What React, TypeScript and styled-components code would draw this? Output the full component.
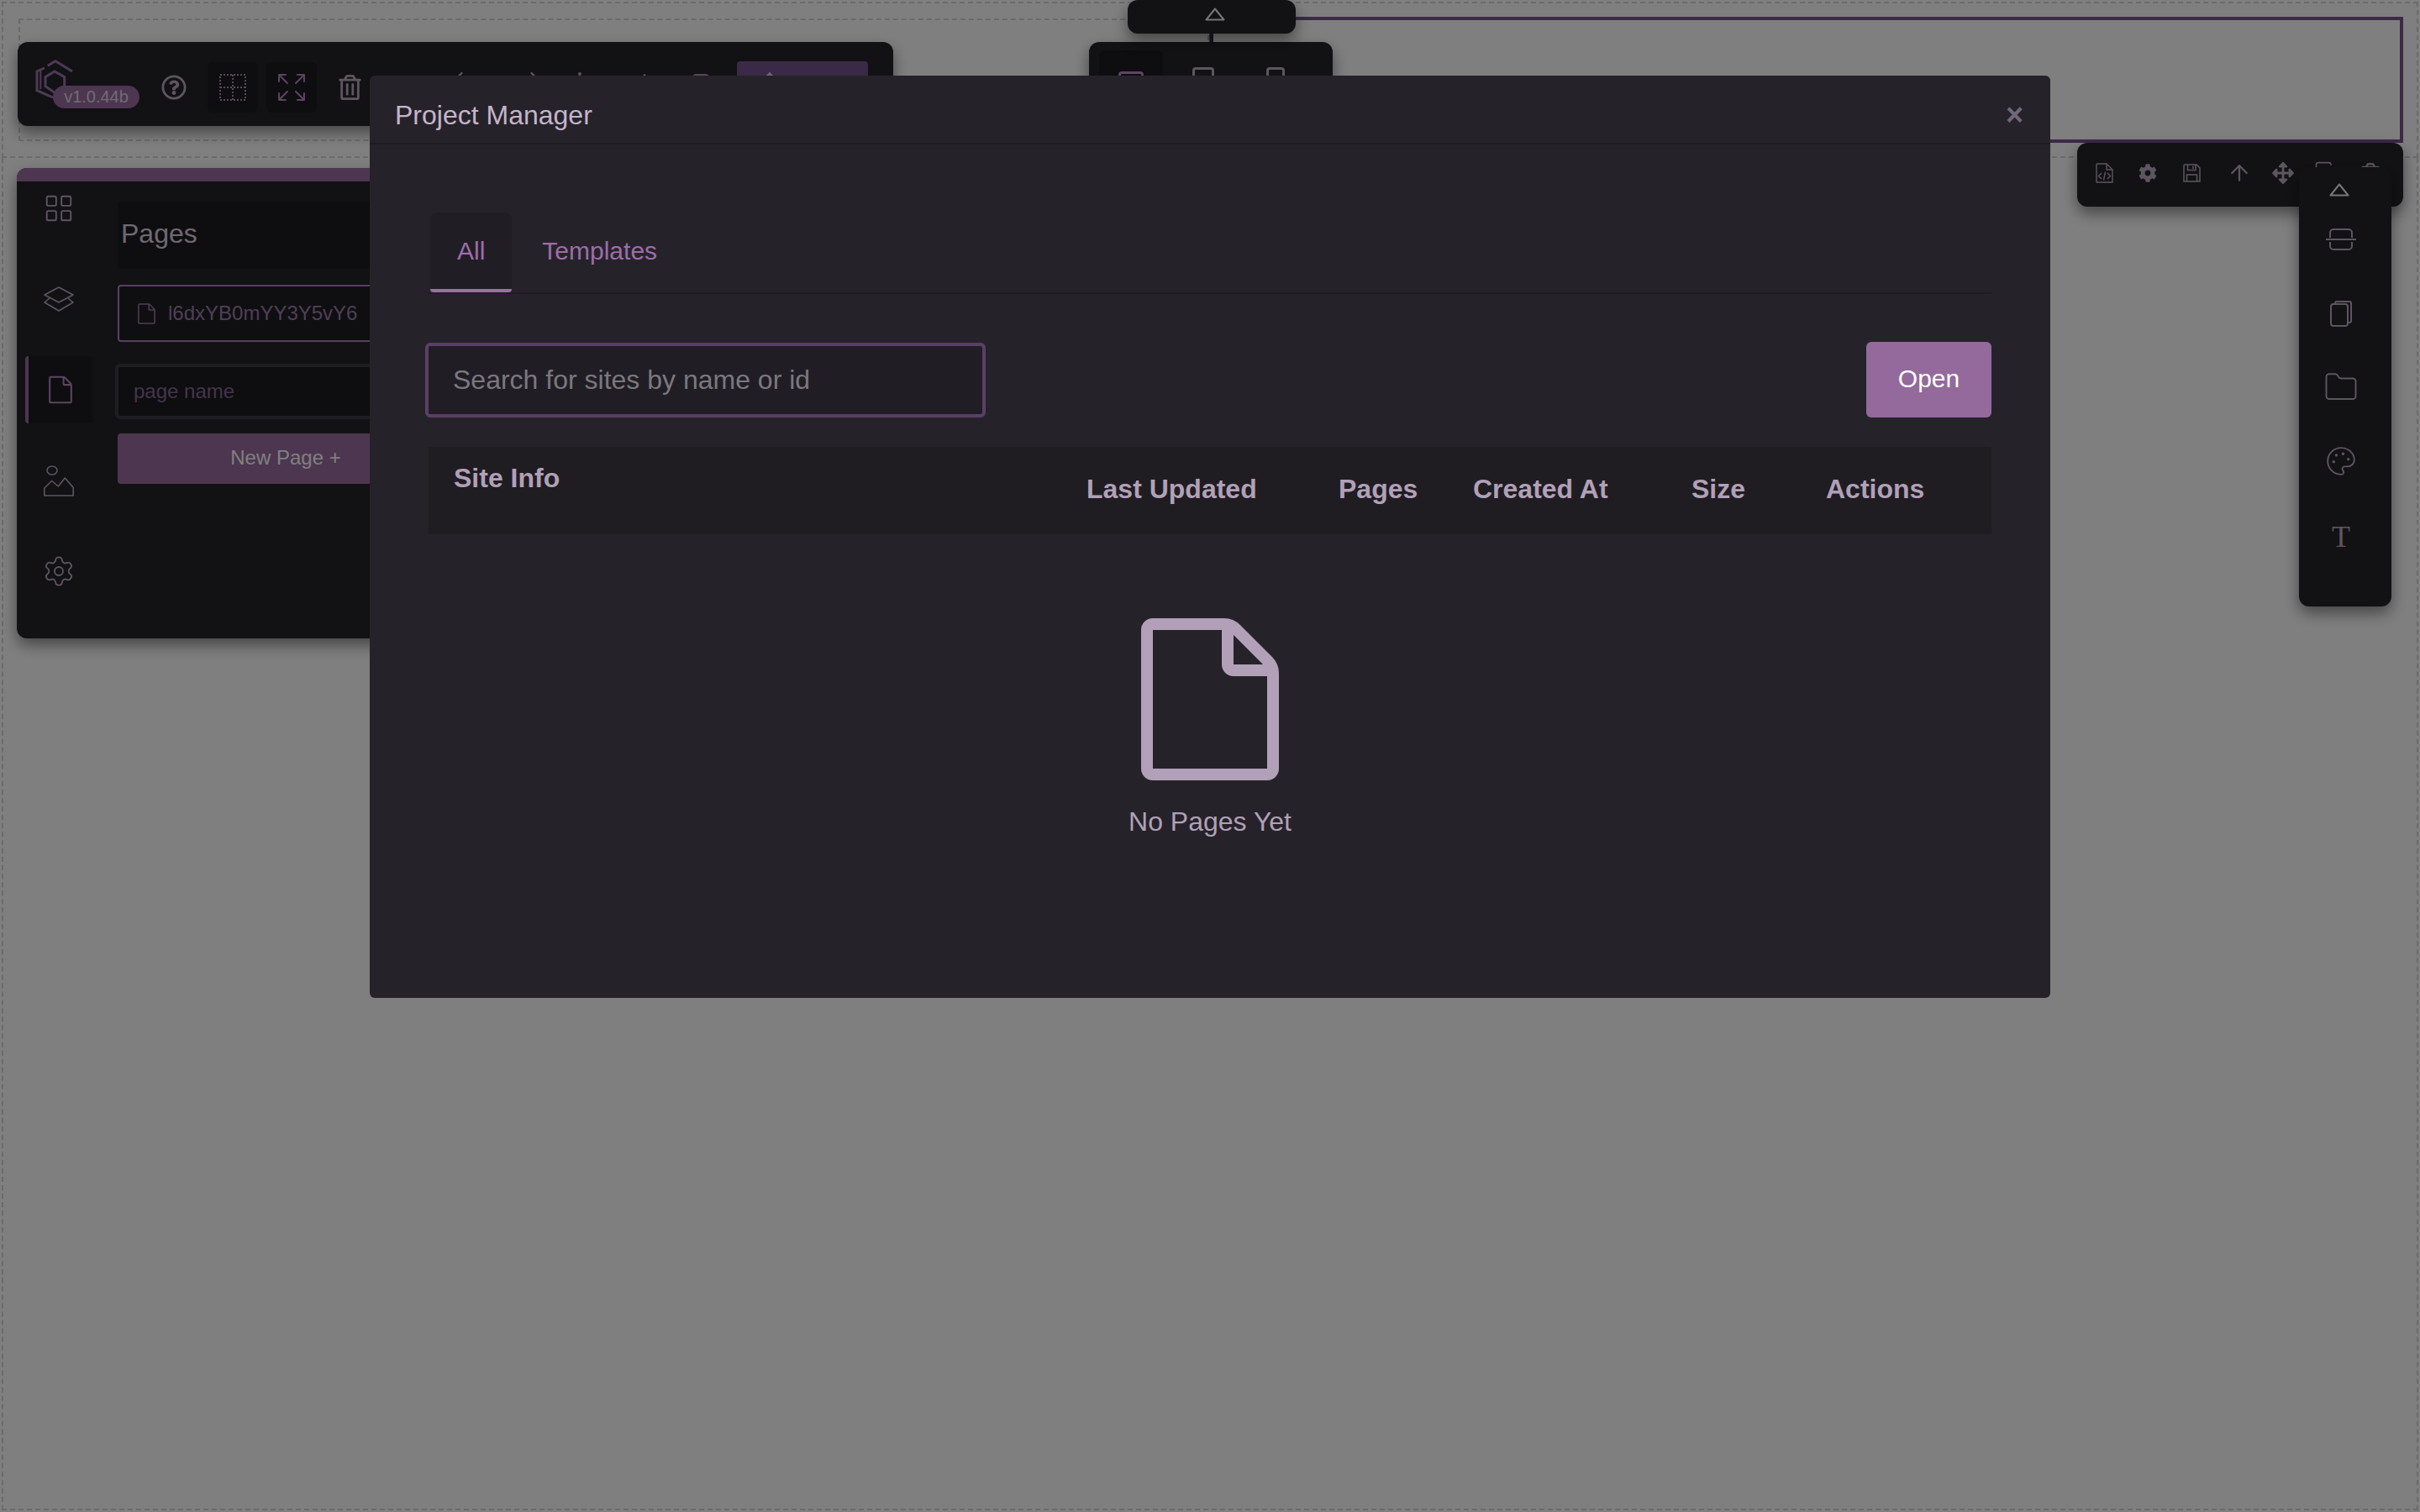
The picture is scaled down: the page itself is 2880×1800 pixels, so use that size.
import styled, { createGlobalStyle, css } from "styled-components"
import {
  ArrowUp,
  ChevronLeft,
  ChevronRight,
  Copy,
  Folder,
  LayoutGrid,
  Palette,
  Settings,
} from "lucide-react"
import { FaArrowsAlt, FaCog, FaRegQuestionCircle, FaRegTrashAlt } from "react-icons/fa"
import { BsArrowsFullscreen } from "react-icons/bs"

import type { FC } from "react"

const PANEL = "#252329"
const PANEL_DARK = "#1c1b1e"
const ACCENT = "#9a6ca0"
const ICON_GREY = "#baaac0"
const ICON_PURPLE = "#b888c6"
const MODAL_TEXT = "#b1a0b7"

const GlobalStyle = createGlobalStyle`
  html, body {
    margin: 0;
    padding: 0;
    width: 2880px;
    height: 1800px;
    overflow: hidden;
    background: #fff;
    font-family: "Liberation Sans", Arial, sans-serif;
  }
  * {
    box-sizing: border-box;
  }
`

const floating = css`
  position: absolute;
  background: ${PANEL};
  border-radius: 12px;
  box-shadow: 0 8px 18px rgba(0, 0, 0, 0.45);
`

const Page = styled.div`
  position: relative;
  width: 2880px;
  height: 1800px;
  padding: 2px;
  display: flex;
  flex-direction: column;
`

const TopSection = styled.section`
  height: 186px;
  padding: 0 16px 0 18px;
  display: flex;
  align-items: center;
  border: 2px dashed #d6d6d6;
`

const DashedCell = styled.div`
  flex: 1;
  height: 146px;
  border: 2px dashed #d6d6d6;
`

const SelectedCell = styled.div`
  flex: 1;
  height: 150px;
  border: 4px solid #76548f;
`

const BodySection = styled.section`
  flex: 1;
  border: 2px dashed #d6d6d6;
  border-top: none;
`

/* main toolbar */
const MainToolbar = styled.div`
  ${floating};
  left: 21px;
  top: 50px;
  width: 1042px;
  height: 100px;
  padding: 8px 0 0 21px;
  display: flex;
  align-items: center;
`

const LogoBlock = styled.div`
  position: relative;
  width: 124px;
  height: 60px;
  padding-bottom: 20px;
  display: flex;
  align-items: center;
`

const VersionPill = styled.span`
  position: absolute;
  left: 21px;
  top: 28px;
  width: 103px;
  height: 27px;
  border-radius: 14px;
  background: ${ACCENT};
  color: #e0d8e4;
  font-size: 20px;
  line-height: 27px;
  text-align: center;
`

const ToolSlot = styled.span<{ $left: number; $width: number; $color?: string; $up?: number }>`
  margin-left: ${props => props.$left}px;
  margin-bottom: ${props => props.$up ?? 0}px;
  width: ${props => props.$width}px;
  display: flex;
  align-items: center;
  justify-content: center;
  color: ${props => props.$color ?? ICON_GREY};
`

const ToolButton = styled(ToolSlot)`
  height: 60px;
  border-radius: 6px;
  background: ${PANEL_DARK};
`

const ToolDot = styled.span`
  width: 4px;
  height: 4px;
  margin-top: -32px;
  border-radius: 50%;
  background: ${ICON_GREY};
`

const ToolPill = styled.span`
  width: 24px;
  height: 32px;
  border-radius: 7px;
  border: 3px solid ${ICON_PURPLE};
`

const PublishButton = styled.div`
  margin-left: 31px;
  width: 156px;
  height: 62px;
  padding: 0 0 14px 23px;
  border-radius: 4px;
  background: #76548f;
  color: #d8cce0;
  display: flex;
  align-items: center;
`

/* device switcher */
const TopHandle = styled.div`
  ${floating};
  left: 1342px;
  top: 0;
  width: 200px;
  height: 40px;
  display: flex;
  justify-content: center;
  padding: 9px 0 0 8px;

  &::before {
    content: "";
    position: absolute;
    left: 95px;
    top: 42px;
    width: 2px;
    height: 6px;
    background: ${ACCENT};
  }

  &::after {
    content: "";
    position: absolute;
    left: 98px;
    top: 40px;
    width: 4px;
    height: 10px;
    background: ${PANEL};
  }
`

const DeviceToolbar = styled.div`
  ${floating};
  left: 1296px;
  top: 50px;
  width: 290px;
  height: 100px;
  padding: 10px 12px;
  display: flex;
  gap: 10px;
`

const DeviceCell = styled.div<{ $active?: boolean }>`
  width: 76px;
  height: 80px;
  border-radius: 6px;
  display: flex;
  align-items: center;
  justify-content: center;
  background: ${props => (props.$active ? PANEL_DARK : "transparent")};
`

const DeviceFrame = styled.span<{ $w: number; $h: number; $active?: boolean }>`
  width: ${props => props.$w}px;
  height: ${props => props.$h}px;
  border-radius: 4px;
  border: 3px solid ${props => (props.$active ? ICON_PURPLE : ICON_GREY)};
`

/* section toolbar */
const SectionToolbar = styled.div`
  ${floating};
  left: 2472px;
  top: 170px;
  width: 388px;
  height: 76px;
  padding: 0 0 4px 6px;
  display: flex;
  align-items: center;
`

const SectionTool = styled.span<{ $gap?: boolean }>`
  width: 52px;
  margin-left: ${props => (props.$gap ? 5 : 0)}px;
  display: flex;
  justify-content: center;
  color: ${ICON_GREY};
`

const SideRail = styled.div`
  ${floating};
  left: 2736px;
  top: 199px;
  width: 110px;
  height: 523px;
  padding: 19px 10px 0 0;
  display: flex;
  flex-direction: column;
  align-items: center;
`

const SideHandle = styled.div`
  height: 23px;
  margin-right: 4px;
`

const SideTool = styled.span`
  height: 88px;
  display: flex;
  align-items: center;
  color: ${ICON_GREY};
`

const SerifGlyph = styled.span`
  margin-top: 4px;
  font-family: "Liberation Serif", "Times New Roman", serif;
  font-size: 36px;
  line-height: 36px;
  color: ${ICON_GREY};
`

/* left panel */
const LeftPanel = styled.div`
  ${floating};
  left: 20px;
  top: 200px;
  width: 570px;
  height: 560px;
  overflow: hidden;
`

const PanelBar = styled.div`
  position: relative;
  height: 16px;
  background: ${ACCENT};
`

const PanelBody = styled.div`
  display: flex;
`

const PanelRail = styled.div`
  width: 120px;
  padding-left: 10px;
  margin-top: -8px;
  display: flex;
  flex-direction: column;
  gap: 28px;
`

const RailItem = styled.div<{ $active?: boolean }>`
  width: 80px;
  height: 80px;
  border-radius: 4px;
  display: flex;
  align-items: center;
  justify-content: center;
  color: ${props => (props.$active ? ICON_PURPLE : ICON_GREY)};
  background: ${props => (props.$active ? PANEL_DARK : "transparent")};
  border-left: ${props => (props.$active ? `4px solid ${ACCENT}` : "none")};
`

const PanelMain = styled.div`
  width: 400px;
  padding-top: 24px;
  display: flex;
  flex-direction: column;
`

const PanelTitle = styled.div`
  height: 80px;
  padding-left: 4px;
  border-radius: 4px;
  background: ${PANEL_DARK};
  color: #dcd3e0;
  font-size: 32px;
  line-height: 76px;
`

const PageRow = styled.div`
  height: 68px;
  margin-top: 19px;
  padding-left: 22px;
  display: flex;
  align-items: center;
  gap: 15px;
  border: 2px solid #b080c0;
  border-radius: 4px;
  background: #1f1e22;
  color: #a07cac;
  font-size: 24px;
`

const PageNameInput = styled.div`
  height: 66px;
  margin: 26px 0 0 -3px;
  padding-left: 18px;
  display: flex;
  align-items: center;
  border: 4px solid #3d3b42;
  border-radius: 6px;
  background: ${PANEL_DARK};
  color: #886a94;
  font-size: 24px;
`

const NewPageButton = styled.div`
  height: 60px;
  margin-top: 17px;
  border-radius: 4px;
  background: ${ACCENT};
  color: #fff;
  font-size: 24px;
  line-height: 58px;
  text-align: center;
`

/* modal */
const Backdrop = styled.div`
  position: absolute;
  inset: 0;
  padding-top: 90px;
  display: flex;
  justify-content: center;
  align-items: flex-start;
  background: rgba(0, 0, 0, 0.5);
`

const Modal = styled.div`
  width: 2000px;
  height: 1098px;
  border-radius: 6px;
  background: ${PANEL};
`

const ModalHeader = styled.header`
  height: 82px;
  padding: 14px 30px 0;
  display: flex;
  align-items: center;
  justify-content: space-between;
  border-bottom: 2px solid #1f1d22;
`

const ModalTitle = styled.h2`
  margin: 0;
  color: #c6b4cc;
  font-size: 32px;
  font-weight: 400;
`

const CloseButton = styled.span`
  margin-right: 2px;
  color: #74677a;
  font-size: 36px;
  font-weight: 700;
  line-height: 36px;
`

const ModalBody = styled.div`
  padding: 81px 70px 0;
`

const Tabs = styled.div`
  padding-left: 2px;
  display: flex;
  gap: 4px;
  border-bottom: 2px solid #1f1d22;
`

const Tab = styled.div<{ $active?: boolean }>`
  height: 95px;
  padding: 0 32px;
  border-radius: 8px 8px 4px 4px;
  color: #9f6cab;
  font-size: 30px;
  line-height: 91px;
  background: ${props => (props.$active ? "#201e24" : "transparent")};
  border-bottom: 4px solid ${props => (props.$active ? "#9a6fa5" : "transparent")};
`

const SearchRow = styled.div`
  margin-top: 57px;
  display: flex;
  align-items: center;
  justify-content: space-between;
`

const SearchInput = styled.div`
  width: 667px;
  height: 89px;
  margin-left: -4px;
  padding-left: 29px;
  display: flex;
  align-items: center;
  border: 4px solid #5a3f66;
  border-radius: 6px;
  background: #201e24;
  color: #7b787e;
  font-size: 32px;
`

const OpenButton = styled.div`
  width: 149px;
  height: 90px;
  border-radius: 6px;
  background: #936a9b;
  color: #fff;
  font-size: 30px;
  line-height: 88px;
  text-align: center;
`

const TableHead = styled.div`
  height: 104px;
  margin-top: 35px;
  display: grid;
  grid-template-columns: 753px 300px 160px 260px 160px 227px;
  background: #1f1d22;
`

const HeadCell = styled.div`
  padding: 32px 0 0 30px;
  color: ${MODAL_TEXT};
  font-size: 32px;
  font-weight: 700;
  line-height: 37px;
  white-space: nowrap;
`

const SiteInfoCell = styled(HeadCell)`
  padding-top: 19px;
`

const EmptyState = styled.div`
  margin-top: 100px;
  display: flex;
  flex-direction: column;
  align-items: center;
  gap: 31px;
  color: ${MODAL_TEXT};
`

const EmptyLabel = styled.div`
  font-size: 32px;
  line-height: 37px;
`

const TriangleUp: FC = () => (
  <svg width="24" height="16" viewBox="0 0 24 16" fill="none">
    <path d="M12 1.5 22.5 14.5H1.5Z" stroke="#eeeaf0" strokeWidth="2" strokeLinejoin="round" />
  </svg>
)

const FileGlyph: FC<{ width: number; height: number; strokeWidth?: number }> = ({
  width,
  height,
  strokeWidth = 14,
}) => (
  <svg width={width} height={height} viewBox="0 0 164 193" fill="none" stroke="currentColor" strokeWidth={strokeWidth}>
    <path d="M14 7H98a21 21 0 0 1 15 6l38 38a21 21 0 0 1 6 15V179a7 7 0 0 1-7 7H14a7 7 0 0 1-7-7V14a7 7 0 0 1 7-7Z" />
    <path d="M103 7V55a7 7 0 0 0 7 7H157" />
  </svg>
)

const Logo: FC = () => (
  <svg width="46" height="46" viewBox="0 0 46 46" fill="none" stroke="#9a74aa" strokeWidth="3">
    <path d="M14.7 7.3 24 1.7 44 14" />
    <path d="M11 10 2 14V36.7L21 45" />
    <path d="M6.3 13.3V35" strokeWidth="2" />
    <path d="M23 14 34.7 20.7V31.7L23 39.3 12 31.7V20.7Z" />
  </svg>
)

const DottedGrid: FC = () => (
  <svg width="32" height="32" viewBox="0 0 32 32" fill="none" stroke="currentColor" strokeWidth="2" strokeDasharray="2 2">
    <rect x="1" y="1" width="30" height="30" />
    <path d="M16 1V31M1 16H31" />
  </svg>
)

const LayersGlyph: FC = () => (
  <svg width="36" height="30" viewBox="0 0 36 30" fill="none" stroke="currentColor" strokeWidth="1.6" strokeLinejoin="round">
    <path d="M18 1 35 10 18 19 1 10Z" />
    <path d="M7 14 1 19 18 29 35 19 29 14" />
  </svg>
)

const PictureGlyph: FC = () => (
  <svg width="36" height="37" viewBox="0 0 36 37" fill="none" stroke="currentColor" strokeWidth="1.6">
    <ellipse cx="10" cy="6" rx="6" ry="5" />
    <path d="M.8 36V27L9.7 18.5 17.3 25 25.3 15 35.2 26.6V36Z" strokeLinejoin="round" />
  </svg>
)

const SplitGlyph: FC = () => (
  <svg width="36" height="26" viewBox="0 0 36 26" fill="none" stroke="currentColor" strokeWidth="2">
    <path d="M5 11V5a4 4 0 0 1 4-4h18a4 4 0 0 1 4 4v6" />
    <path d="M0 13H36" />
    <path d="M5 16v5a4 4 0 0 0 4 4h18a4 4 0 0 0 4-4v-5" />
  </svg>
)

const CopiesGlyph: FC = () => (
  <svg width="26" height="31" viewBox="0 0 26 31" fill="none" stroke="currentColor" strokeWidth="2">
    <rect x="1" y="4" width="20" height="26" rx="3" />
    <path d="M6 4V3a2 2 0 0 1 2-2h15a2 2 0 0 1 2 2v21a2 2 0 0 1-2 2h-2" />
  </svg>
)

const FileCodeGlyph: FC = () => (
  <svg width="21" height="24" viewBox="0 0 21 24" fill="none" stroke="currentColor" strokeWidth="1.4">
    <path d="M13 1H2a1 1 0 0 0-1 1V23H20V8Z" />
    <path d="M13 1V8H20" />
    <path d="M7 12 3.5 15.5 7 19M14 12l3.5 3.5L14 19M11.5 10.5 9.5 20.5" />
  </svg>
)

const FloppyGlyph: FC = () => (
  <svg width="21" height="22" viewBox="0 0 21 22" fill="none" stroke="currentColor" strokeWidth="1.5">
    <path d="M2 1H16L20 5V21H1V2a1 1 0 0 1 1-1Z" />
    <path d="M5.5 1V7.5H15V1" />
    <path d="M12 2.5V6" />
    <path d="M4.5 21V13H16.5V21" />
  </svg>
)

const tableColumns = ["Last Updated", "Pages", "Created At", "Size", "Actions"]

export default function App() {
  return (
    <Page>
      <GlobalStyle />

      <TopSection>
        <DashedCell />
        <SelectedCell />
      </TopSection>
      <BodySection />

      <LeftPanel>
        <PanelBar />
        <PanelBody>
          <PanelRail>
            <RailItem>
              <LayoutGrid size={38} strokeWidth={1.2} />
            </RailItem>
            <RailItem>
              <LayersGlyph />
            </RailItem>
            <RailItem $active>
              <FileGlyph width={28} height={36} strokeWidth={12} />
            </RailItem>
            <RailItem>
              <PictureGlyph />
            </RailItem>
            <RailItem>
              <Settings size={40} strokeWidth={1.1} />
            </RailItem>
          </PanelRail>
          <PanelMain>
            <PanelTitle>Pages</PanelTitle>
            <PageRow>
              <FileGlyph width={21} height={25} strokeWidth={12} />
              l6dxYB0mYY3Y5vY6
            </PageRow>
            <PageNameInput>page name</PageNameInput>
            <NewPageButton>New Page +</NewPageButton>
          </PanelMain>
        </PanelBody>
      </LeftPanel>

      <MainToolbar>
        <LogoBlock>
          <Logo />
          <VersionPill>v1.0.44b</VersionPill>
        </LogoBlock>
        <ToolSlot $left={25} $width={31}>
          <FaRegQuestionCircle size={30} />
        </ToolSlot>
        <ToolButton $left={25} $width={60} $color={ICON_PURPLE}>
          <DottedGrid />
        </ToolButton>
        <ToolButton $left={10} $width={60} $color={ICON_PURPLE}>
          <BsArrowsFullscreen size={32} />
        </ToolButton>
        <ToolSlot $left={26} $width={27}>
          <FaRegTrashAlt size={30} />
        </ToolSlot>
        <ToolSlot $left={97} $width={36} $up={16}>
          <ChevronLeft size={44} strokeWidth={1.6} />
        </ToolSlot>
        <ToolSlot $left={56} $width={36} $up={16}>
          <ChevronRight size={44} strokeWidth={1.6} />
        </ToolSlot>
        <ToolSlot $left={21} $width={28}>
          <ToolDot />
        </ToolSlot>
        <ToolSlot $left={50} $width={26} $up={14}>
          <ArrowUp size={44} strokeWidth={2} />
        </ToolSlot>
        <ToolSlot $left={42} $width={24} $color={ICON_PURPLE}>
          <ToolPill />
        </ToolSlot>
        <PublishButton>
          <ArrowUp size={32} strokeWidth={2} />
        </PublishButton>
      </MainToolbar>

      <DeviceToolbar>
        <DeviceCell $active>
          <DeviceFrame $w={30} $h={30} $active />
        </DeviceCell>
        <DeviceCell>
          <DeviceFrame $w={26} $h={40} />
        </DeviceCell>
        <DeviceCell>
          <DeviceFrame $w={22} $h={40} />
        </DeviceCell>
      </DeviceToolbar>
      <TopHandle>
        <TriangleUp />
      </TopHandle>

      <SectionToolbar>
        <SectionTool>
          <FileCodeGlyph />
        </SectionTool>
        <SectionTool>
          <FaCog size={22} />
        </SectionTool>
        <SectionTool>
          <FloppyGlyph />
        </SectionTool>
        <SectionTool $gap>
          <ArrowUp size={30} strokeWidth={1.8} />
        </SectionTool>
        <SectionTool>
          <FaArrowsAlt size={26} />
        </SectionTool>
        <SectionTool>
          <Copy size={30} strokeWidth={1.4} />
        </SectionTool>
        <SectionTool>
          <FaRegTrashAlt size={24} />
        </SectionTool>
      </SectionToolbar>
      <SideRail>
        <SideHandle>
          <TriangleUp />
        </SideHandle>
        <SideTool>
          <SplitGlyph />
        </SideTool>
        <SideTool>
          <CopiesGlyph />
        </SideTool>
        <SideTool>
          <Folder size={42} strokeWidth={1.1} />
        </SideTool>
        <SideTool>
          <Palette size={38} strokeWidth={1.2} />
        </SideTool>
        <SideTool>
          <SerifGlyph>T</SerifGlyph>
        </SideTool>
      </SideRail>

      <Backdrop>
        <Modal>
          <ModalHeader>
            <ModalTitle>Project Manager</ModalTitle>
            <CloseButton>×</CloseButton>
          </ModalHeader>
          <ModalBody>
            <Tabs>
              <Tab $active>All</Tab>
              <Tab>Templates</Tab>
            </Tabs>
            <SearchRow>
              <SearchInput>Search for sites by name or id</SearchInput>
              <OpenButton>Open</OpenButton>
            </SearchRow>
            <TableHead>
              <SiteInfoCell>Site Info</SiteInfoCell>
              {tableColumns.map(column => (
                <HeadCell key={column}>{column}</HeadCell>
              ))}
            </TableHead>
            <EmptyState>
              <FileGlyph width={164} height={193} />
              <EmptyLabel>No Pages Yet</EmptyLabel>
            </EmptyState>
          </ModalBody>
        </Modal>
      </Backdrop>
    </Page>
  )
}
